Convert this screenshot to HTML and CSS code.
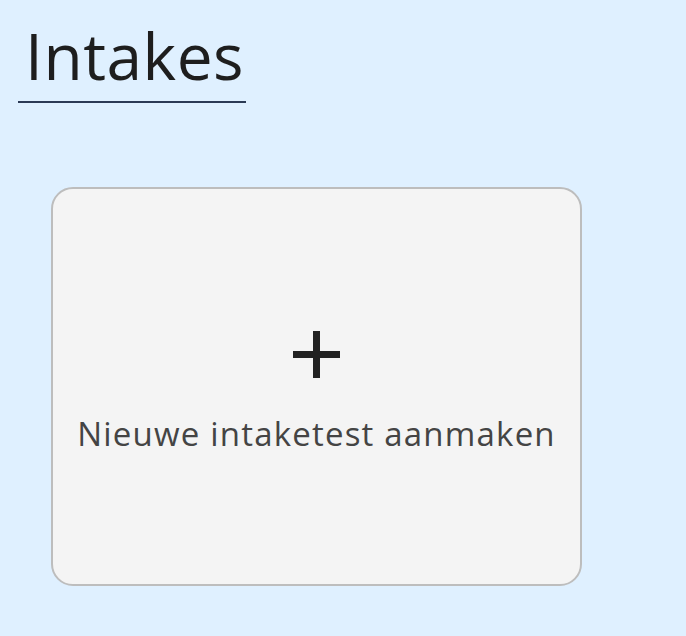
FILE: index.html
```html
<!DOCTYPE html>
<html lang="nl">
<head>
<meta charset="utf-8">
<title>Intakes</title>
<link rel="stylesheet" href="styles.css">
</head>
<body>
<header class="page-header">
  <h1 class="page-title">Intakes</h1>
</header>
<main class="intake-list">
  <a class="new-card" href="#">
    <svg class="plus-icon" width="47" height="47" viewBox="0 0 47 47" aria-hidden="true">
      <rect x="0" y="20" width="47" height="7" fill="#222"/>
      <rect x="20" y="0" width="7" height="47" fill="#222"/>
    </svg>
    <span class="new-card-label">Nieuwe intaketest aanmaken</span>
  </a>
</main>
</body>
</html>
```
FILE: styles.css
```css
html, body {
  margin: 0;
  padding: 0;
}
body {
  background: #dff0ff;
  font-family: "Open Sans", "Noto Sans", sans-serif;
  width: 686px;
  height: 636px;
  overflow: hidden;
}
.page-header {
  padding: 24px 0 0 18px;
}
.page-title {
  display: inline-block;
  margin: 0;
  padding: 0 2px 13px 7px;
  font-size: 64px;
  line-height: 64px;
  font-weight: 400;
  letter-spacing: 0.5px;
  color: #1e1e1e;
  border-bottom: 2px solid #2b3a55;
}
.intake-list {
  padding: 84px 0 0 51px;
}
.new-card {
  box-sizing: border-box;
  width: 531px;
  height: 399px;
  display: flex;
  flex-direction: column;
  align-items: center;
  padding-top: 142px;
  gap: 36px;
  background: #f4f4f4;
  border: 2px solid #bdbdbd;
  border-radius: 22px;
  text-decoration: none;
}
.plus-icon {
  display: block;
}
.new-card-label {
  font-size: 33px;
  line-height: 40px;
  letter-spacing: 1.2px;
  color: #444;
}
```
